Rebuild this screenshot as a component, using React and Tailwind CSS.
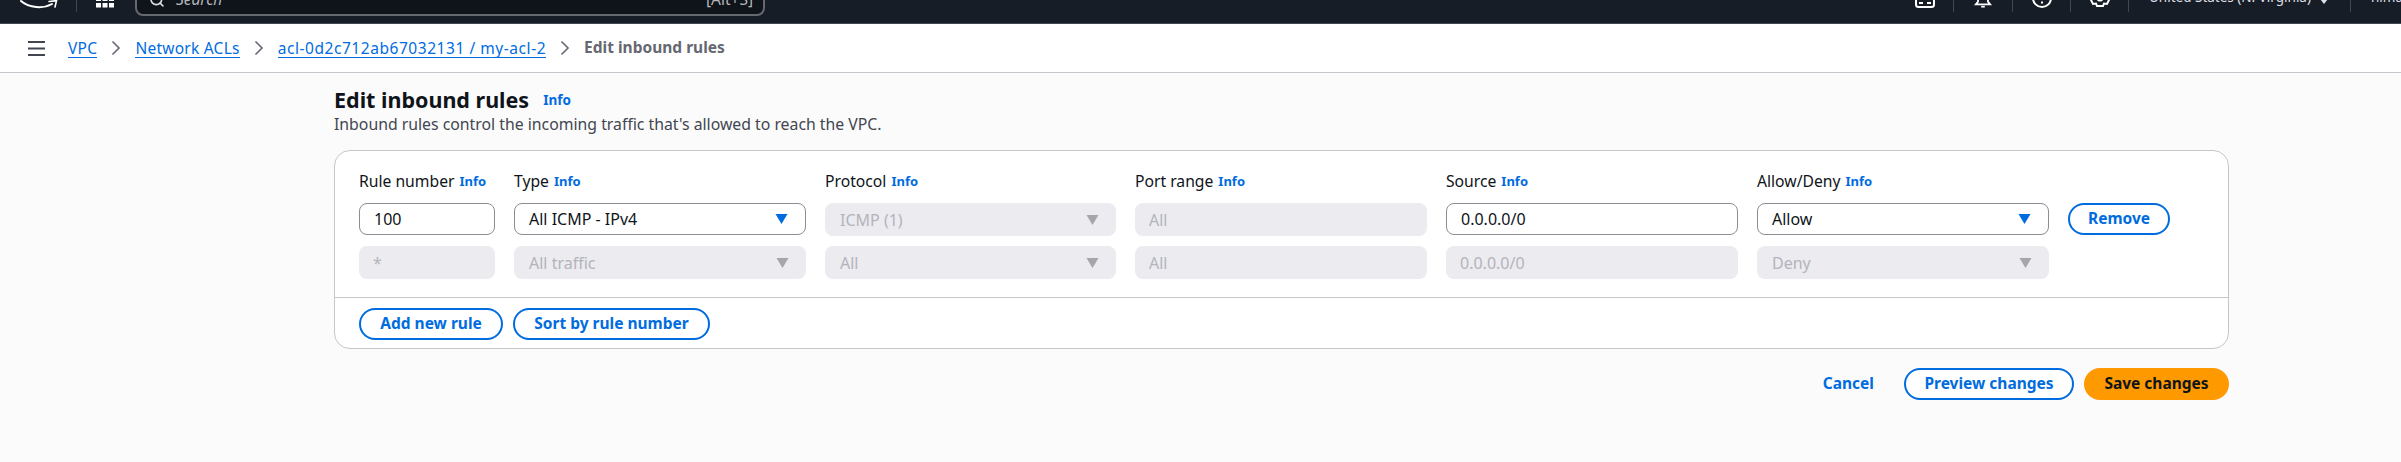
import { Search } from "lucide-react";

const font = "font-['Noto_Sans',sans-serif]";

const Info = ({ className = "" }) => (
  <span className={`font-bold text-[#006ce0] ${className}`}>Info</span>
);

const Arrow = ({ disabled }) => (
  <svg width="13" height="10" viewBox="0 0 13 10" className="shrink-0">
    <path d="M0.5 0h12L6.5 10z" fill={disabled ? "#a5a5ac" : "#006ce0"} />
  </svg>
);

const Field = ({ label }) => (
  <div className="flex h-[22px] items-center gap-[5px] text-[15.7px] text-[#0f141a]">
    {label}
    <Info className="text-[13px]" />
  </div>
);

const Input = ({ value, disabled }) => (
  <div
    className={
      disabled
        ? "flex h-[33px] items-center rounded-lg bg-[#ebebf0] px-[14px] text-[16px] text-[#b4b4bb]"
        : "flex h-[32px] items-center rounded-lg border border-[#8c8c94] bg-white px-[14px] text-[16px] text-[#0f141a]"
    }
  >
    {value}
  </div>
);

const Select = ({ value, disabled }) => (
  <div
    className={
      disabled
        ? "flex h-[33px] items-center justify-between rounded-lg bg-[#ebebf0] pl-[15px] pr-[17px] text-[16px] text-[#b4b4bb]"
        : "flex h-[32px] items-center justify-between rounded-lg border border-[#8c8c94] bg-white pl-[14px] pr-[17px] text-[16px] text-[#0f141a]"
    }
  >
    {value}
    <Arrow disabled={disabled} />
  </div>
);

const Button = ({ children, className = "" }) => (
  <button
    className={`flex h-[32px] items-center justify-center rounded-[20px] border-2 border-[#006ce0] bg-white text-[15.5px] font-bold text-[#006ce0] ${className}`}
  >
    {children}
  </button>
);

const Crumb = ({ children, className = "" }) => (
  <span className={`border-b border-[#006ce0] leading-[18px] text-[#006ce0] ${className}`}>{children}</span>
);

const Chevron = () => (
  <svg width="12" height="16" viewBox="0 0 12 16" fill="none" stroke="#656871" strokeWidth="1.6" className="mx-[13px]">
    <path d="M2.5 1.5 9 8l-6.5 6.5" />
  </svg>
);

const Sep = ({ className = "" }) => <div className={`mb-[11px] h-[20px] w-px bg-[#424650] ${className}`} />;

function Header() {
  return (
    <header className="flex h-[24px] items-end overflow-hidden border-b border-[#424650] bg-[#161d26] text-[15.5px] text-[#dedee3]">
      {/* amazon smile, top of the bar is cut off in the shot */}
      <svg width="38" height="10" viewBox="0 0 38 10" fill="none" className="mb-[13px] ml-[20px] shrink-0">
        <path d="M1 1c8 7 22 8 31 3" stroke="#fff" strokeWidth="2" strokeLinecap="round" />
        <path d="M29 1.5 36.5 0.6 35 7" stroke="#fff" strokeWidth="1.6" strokeLinecap="round" />
      </svg>
      <Sep className="ml-[18px]" />
      <svg width="18" height="18" viewBox="0 0 18 18" fill="#fff" className="mb-[15px] ml-[19px] shrink-0">
        <rect x="0" y="0" width="5" height="4.5" />
        <rect x="6.5" y="0" width="5" height="4.5" />
        <rect x="13" y="0" width="5" height="4.5" />
        <rect x="0" y="6.5" width="5" height="4.5" />
        <rect x="6.5" y="6.5" width="5" height="4.5" />
        <rect x="13" y="6.5" width="5" height="4.5" />
        <rect x="0" y="13" width="5" height="4.5" />
        <rect x="6.5" y="13" width="5" height="4.5" />
        <rect x="13" y="13" width="5" height="4.5" />
      </svg>
      <div className="mb-[7px] ml-[21px] flex h-[32px] w-[630px] shrink-0 items-center justify-between rounded-lg border-2 border-[#656871] bg-[#0f141a] pl-[12px] pr-[10px] text-[#b4b4bb]">
        <div className="flex items-center gap-[11px]">
          <Search size={16} strokeWidth={2.4} className="text-[#dedee3]" />
          <span className="italic">Search</span>
        </div>
        <span>[Alt+S]</span>
      </div>

      <div className="ml-auto flex min-w-0 items-end text-[13.5px]">
        <svg width="20" height="20" viewBox="0 0 20 20" fill="none" stroke="#fff" strokeWidth="2" className="mb-[15px] shrink-0">
          <rect x="1" y="1" width="18" height="18" rx="2.5" />
          <path d="M4 15h4M5 5l4 3-4 3M12 15h4" />
        </svg>
        <Sep className="ml-[18px]" />
        <svg width="18" height="18" viewBox="0 0 20 20" fill="none" stroke="#fff" strokeWidth="2" className="mb-[15px] ml-[20px] shrink-0">
          <path d="M2 16h16l-2.5-3V8a5.5 5.5 0 0 0-11 0v5z" />
          <path d="M8 18.5h4" />
        </svg>
        <Sep className="ml-[20px]" />
        <svg width="20" height="20" viewBox="0 0 20 20" fill="none" stroke="#fff" strokeWidth="2" className="mb-[15px] ml-[19px] shrink-0">
          <circle cx="10" cy="10" r="9" />
          <path d="M10 5v6M10 13.5v2" />
        </svg>
        <Sep className="ml-[18px]" />
        <svg width="20" height="20" viewBox="0 0 20 20" fill="none" stroke="#fff" strokeWidth="2" className="mb-[15px] ml-[19px] shrink-0">
          <path d="M7 2h6l1 2.5 3-.5 2 4-2 2 2 2-2 4-3-.5-1 2.5H7l-1-2.5-3 .5-2-4 2-2-2-2 2-4 3 .5z" />
          <circle cx="10" cy="10" r="2.5" />
        </svg>
        <Sep className="ml-[18px]" />
        <span className="mb-[16px] ml-[20px] whitespace-nowrap leading-[20px]">United States (N. Virginia)</span>
        <svg width="8" height="5" viewBox="0 0 8 5" className="mb-[19px] ml-[9px] shrink-0">
          <path d="M0 0h8L4 5z" fill="#dedee3" />
        </svg>
        <Sep className="ml-[22px]" />
        <span className="mb-[16px] ml-[20px] w-[30px] overflow-hidden whitespace-nowrap leading-[20px]">himanshu</span>
      </div>
    </header>
  );
}

export default function App() {
  return (
    <div className={`min-h-[462px] bg-[#fbfbfc] ${font}`}>
      <Header />

      <nav className="flex h-[49px] items-center border-b border-[#c6c6cd] bg-white pl-[28px] text-[15.5px]">
        <svg width="17" height="15" viewBox="0 0 17 15" fill="#424650" className="mr-[23px]">
          <rect y="0" width="17" height="2" />
          <rect y="6.5" width="17" height="2" />
          <rect y="13" width="17" height="2" />
        </svg>
        <Crumb className="tracking-[0.3px]">VPC</Crumb>
        <Chevron />
        <Crumb className="tracking-[0.25px]">Network ACLs</Crumb>
        <Chevron />
        <Crumb className="tracking-[0.55px]">acl-0d2c712ab67032131 / my-acl-2</Crumb>
        <Chevron />
        <span className="font-bold text-[#656871]">Edit inbound rules</span>
      </nav>

      <main className="ml-[334px] w-[1895px] pt-[13px]">
        <div className="flex items-center gap-[14px]">
          <h1 className="text-[21.5px] font-bold leading-[28px] text-[#0f141a]">Edit inbound rules</h1>
          <Info className="text-[13.5px]" />
        </div>
        <p className="text-[15.8px] leading-[20px] text-[#424650]">
          Inbound rules control the incoming traffic that's allowed to reach the VPC.
        </p>

        <section className="mt-[16px] h-[199px] rounded-2xl border border-[#c6c6cd] bg-white">
          <div className="grid grid-cols-[136px_292px_291px_292px_292px_292px_102px] gap-x-[19px] px-[24px] pt-[20px]">
            <Field label="Rule number" />
            <Field label="Type" />
            <Field label="Protocol" />
            <Field label="Port range" />
            <Field label="Source" />
            <Field label="Allow/Deny" />
            <div />

            <div className="mt-[10px]"><Input value="100" /></div>
            <div className="mt-[10px]"><Select value="All ICMP - IPv4" /></div>
            <div className="mt-[10px]"><Select value="ICMP (1)" disabled /></div>
            <div className="mt-[10px]"><Input value="All" disabled /></div>
            <div className="mt-[10px]"><Input value="0.0.0.0/0" /></div>
            <div className="mt-[10px]"><Select value="Allow" /></div>
            <div className="mt-[10px]"><Button className="w-[102px]">Remove</Button></div>

            <div className="mt-[10px]"><Input value="*" disabled /></div>
            <div className="mt-[10px]"><Select value="All traffic" disabled /></div>
            <div className="mt-[10px]"><Select value="All" disabled /></div>
            <div className="mt-[10px]"><Input value="All" disabled /></div>
            <div className="mt-[10px]"><Input value="0.0.0.0/0" disabled /></div>
            <div className="mt-[10px]"><Select value="Deny" disabled /></div>
          </div>

          <div className="mt-[18px] flex gap-[10px] border-t border-[#c6c6cd] px-[24px] pt-[10px]">
            <Button className="w-[144px]">Add new rule</Button>
            <Button className="w-[197px]">Sort by rule number</Button>
          </div>
        </section>

        <div className="mt-[19px] flex items-center justify-end">
          <span className="mr-[30px] text-[15.5px] font-bold text-[#006ce0]">Cancel</span>
          <Button className="mr-[10px] w-[170px]">Preview changes</Button>
          <button className="flex h-[32px] w-[145px] items-center justify-center rounded-[20px] bg-[#ff9900] text-[15.5px] font-bold text-[#0f141a]">
            Save changes
          </button>
        </div>
      </main>
    </div>
  );
}
